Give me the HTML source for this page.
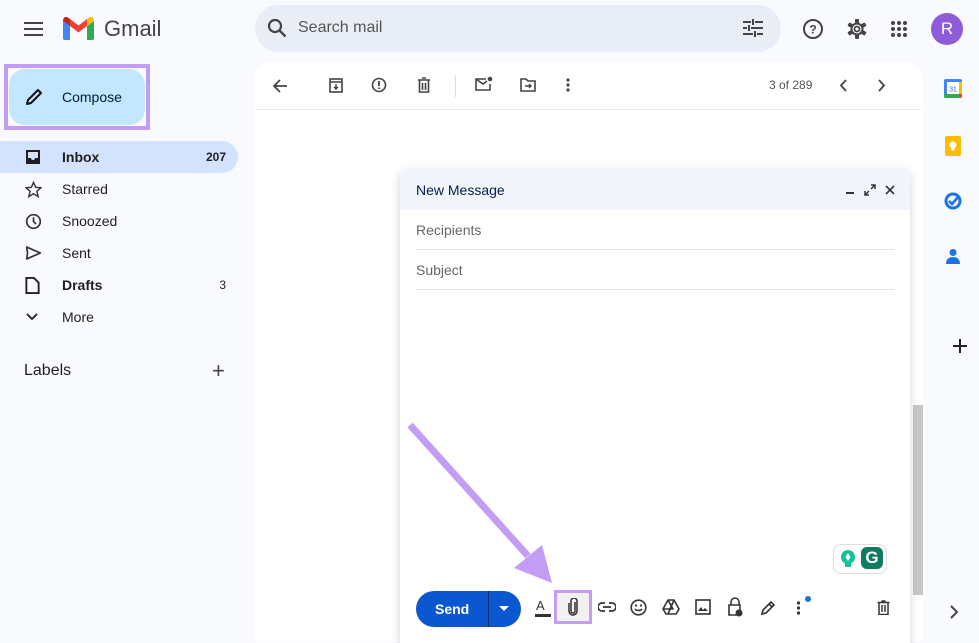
<!DOCTYPE html>
<html><head><meta charset="utf-8"><style>
*{box-sizing:border-box;margin:0;padding:0}
body{width:979px;height:637px;overflow:hidden;background:#f8fafd;font-family:"Liberation Sans",Arial,sans-serif;position:relative;color:#1f1f1f}
.a{position:absolute}
svg{display:block}
.nav{position:absolute;left:0;width:238px;height:32px;font-size:14px;display:flex;align-items:center;color:#1f1f1f}
.nav .ic{position:absolute;left:25px;top:8px}
.nav .t{position:absolute;left:62px}
.nav .n{position:absolute;right:12px;font-size:12px}
</style></head><body>
<div class="a" style="left:24px;top:22px;width:19px;height:14px">
<div style="height:2px;background:#444;margin-bottom:4px"></div><div style="height:2px;background:#444;margin-bottom:4px"></div><div style="height:2px;background:#444"></div></div>
<svg class="a" style="left:63px;top:17px" width="31" height="23" viewBox="0 0 31 23">
<path d="M0 4v17a2 2 0 0 0 2 2h5V9z" fill="#4285f4"/><path d="M24 9v14h5a2 2 0 0 0 2-2V4z" fill="#34a853"/>
<path d="M7 9l8.5 6.5L24 9V2l-8.5 6.5L7 2z" fill="#ea4335"/><path d="M0 4l7 5V2L4 0C2 -1 0 1 0 4z" fill="#c5221f"/><path d="M31 4l-7 5V2l3-2c2-1 4 1 4 4z" fill="#fbbc04"/></svg>
<div class="a" style="left:104px;top:16px;font-size:22px;color:#444">Gmail</div>
<div class="a" style="left:255px;top:5px;width:526px;height:47px;border-radius:24px;background:#e9eef6"></div>
<svg class="a" style="left:267px;top:18px" width="20" height="20" viewBox="0 0 20 20"><circle cx="8" cy="8" r="6" fill="none" stroke="#444" stroke-width="2.2"/><path d="M12.5 12.5l6 6" stroke="#444" stroke-width="2.4"/></svg>
<div class="a" style="left:298px;top:19px;font-size:16px;color:#555">Search mail</div>
<svg class="a" style="left:743px;top:19px" width="20" height="18" viewBox="0 0 20 18"><g stroke="#444" stroke-width="2"><path d="M0 3h8M12 3h8M0 9h4M8 9h12M0 15h10M14 15h6M10 0v6M6 6v6M12 12v6"/></g></svg>
<svg class="a" style="left:802px;top:18px" width="22" height="22" viewBox="0 0 22 22"><circle cx="11" cy="11" r="9" fill="none" stroke="#444" stroke-width="2"/><text x="11" y="15.5" font-size="12" font-weight="bold" text-anchor="middle" fill="#444" font-family="Liberation Sans">?</text></svg>
<svg class="a" style="left:846px;top:18px" width="22" height="22" viewBox="0 0 22 22"><g fill="#444"><rect x="9" y="1" width="4" height="20" rx="1"/><rect x="9" y="1" width="4" height="20" rx="1" transform="rotate(60 11 11)"/><rect x="9" y="1" width="4" height="20" rx="1" transform="rotate(120 11 11)"/></g><circle cx="11" cy="11" r="6.5" fill="#444"/><circle cx="11" cy="11" r="4.5" fill="#f8fafd"/><circle cx="11" cy="11" r="2.5" fill="none" stroke="#444" stroke-width="1.8"/></svg>
<svg class="a" style="left:890px;top:20px" width="18" height="18" viewBox="0 0 18 18" fill="#444"><circle cx="3" cy="3" r="2"/><circle cx="9" cy="3" r="2"/><circle cx="15" cy="3" r="2"/><circle cx="3" cy="9" r="2"/><circle cx="9" cy="9" r="2"/><circle cx="15" cy="9" r="2"/><circle cx="3" cy="15" r="2"/><circle cx="9" cy="15" r="2"/><circle cx="15" cy="15" r="2"/></svg>
<div class="a" style="left:931px;top:13px;width:32px;height:32px;border-radius:50%;background:#8e5cd9;color:#fff;font-size:17px;text-align:center;line-height:32px">R</div>
<div class="a" style="left:4px;top:64px;width:146px;height:66px;border:4px solid #c39cf4"></div>
<div class="a" style="left:9px;top:69px;width:136px;height:56px;border-radius:16px;background:#c2e7ff"></div>
<svg class="a" style="left:24px;top:87px" width="20" height="20" viewBox="0 0 20 20"><path d="M3 17l1-4L14 3l3 3L7 16z" fill="none" stroke="#111" stroke-width="2" stroke-linejoin="round"/></svg>
<div class="a" style="left:62px;top:89px;font-size:14px;color:#001d35">Compose</div>
<div class="a" style="left:0;top:141px;width:238px;height:32px;background:#d3e3fd;border-radius:0 16px 16px 0"></div>
<div class="nav" style="top:141px;font-weight:bold"><svg class="ic" width="16" height="16" viewBox="0 0 16 16"><path d="M1 1h14v14H1z" fill="#1f1f1f"/><path d="M3 3h10v6h-3a2 2 0 0 1-4 0H3z" fill="#d3e3fd"/></svg><span class="t">Inbox</span><span class="n">207</span></div>
<div class="nav" style="top:173px"><svg class="ic" width="17" height="17" viewBox="0 0 24 24"><path d="M12 2l3 7 7.5.6-5.7 5 1.8 7.4L12 18l-6.6 4 1.8-7.4-5.7-5L9 9z" fill="none" stroke="#333" stroke-width="2"/></svg><span class="t">Starred</span></div>
<div class="nav" style="top:205px"><svg class="ic" width="17" height="17" viewBox="0 0 20 20"><circle cx="10" cy="10" r="8" fill="none" stroke="#333" stroke-width="2"/><path d="M10 5v5l3 3" stroke="#333" stroke-width="2" fill="none"/></svg><span class="t">Snoozed</span></div>
<div class="nav" style="top:237px"><svg class="ic" width="17" height="16" viewBox="0 0 20 18"><path d="M2 2l16 7-16 7 1-7z" fill="none" stroke="#333" stroke-width="2" stroke-linejoin="round"/></svg><span class="t">Sent</span></div>
<div class="nav" style="top:269px;font-weight:bold"><svg class="ic" width="15" height="17" viewBox="0 0 15 18"><path d="M1 1h8l5 5v11H1z" fill="none" stroke="#222" stroke-width="2"/></svg><span class="t">Drafts</span><span class="n" style="font-weight:normal">3</span></div>
<div class="nav" style="top:301px"><svg class="ic" width="14" height="16" viewBox="0 0 14 16"><path d="M2 5l5 5 5-5" fill="none" stroke="#333" stroke-width="2"/></svg><span class="t">More</span></div>
<div class="a" style="left:24px;top:362px;font-size:16px;color:#1f1f1f">Labels</div>
<div class="a" style="left:212px;top:358px;font-size:22px;color:#444">+</div>
<div class="a" style="left:254px;top:62px;width:669px;height:580px;background:#fff;border-radius:16px 16px 0 0"></div>
<div class="a" style="left:255px;top:109px;width:666px;height:1px;background:#e8eaed"></div>
<div class="a" style="left:913px;top:405px;width:10px;height:190px;background:#c8c8c8"></div>
<svg class="a" style="left:272px;top:78px" width="16" height="16" viewBox="0 0 16 16"><path d="M15 8H2M8 2L2 8l6 6" fill="none" stroke="#444" stroke-width="1.8"/></svg>
<svg class="a" style="left:329px;top:77px" width="14" height="16" viewBox="0 0 14 16"><rect x="1" y="2" width="12" height="13" fill="none" stroke="#444" stroke-width="1.6"/><path d="M1 5h12M7 7v5M5 10l2 2 2-2" stroke="#444" stroke-width="1.4" fill="none"/></svg>
<svg class="a" style="left:371px;top:77px" width="16" height="16" viewBox="0 0 16 16"><circle cx="8" cy="8" r="6.5" fill="none" stroke="#444" stroke-width="1.6"/><path d="M8 4v5M8 10.5v1.5" stroke="#444" stroke-width="1.8"/></svg>
<svg class="a" style="left:417px;top:77px" width="14" height="16" viewBox="0 0 14 16"><path d="M1 3h12M5 1h4M2.5 3v12h9V3M5.5 6v7M8.5 6v7" fill="none" stroke="#444" stroke-width="1.6"/></svg>
<div class="a" style="left:455px;top:75px;width:1px;height:22px;background:#ddd"></div>
<svg class="a" style="left:475px;top:76px" width="18" height="16" viewBox="0 0 18 16"><path d="M11 3H1v11h14V8M1 3l7 5 4-3" fill="none" stroke="#444" stroke-width="1.6"/><circle cx="15" cy="3" r="2.3" fill="#444"/></svg>
<svg class="a" style="left:520px;top:78px" width="16" height="14" viewBox="0 0 16 14"><path d="M1 1h5l2 2h7v10H1z" fill="none" stroke="#444" stroke-width="1.6"/><path d="M5 8h6M9 6l2 2-2 2" stroke="#444" stroke-width="1.4" fill="none"/></svg>
<svg class="a" style="left:565px;top:77px" width="6" height="16" viewBox="0 0 6 16" fill="#444"><circle cx="3" cy="3" r="1.6"/><circle cx="3" cy="8" r="1.6"/><circle cx="3" cy="13" r="1.6"/></svg>
<div class="a" style="left:769px;top:78px;font-size:12px;color:#555">3 of 289</div>
<svg class="a" style="left:838px;top:79px" width="10" height="13" viewBox="0 0 10 13"><path d="M8 1L3 6.5 8 12" fill="none" stroke="#444" stroke-width="1.8"/></svg>
<svg class="a" style="left:877px;top:79px" width="10" height="13" viewBox="0 0 10 13"><path d="M2 1l5 5.5L2 12" fill="none" stroke="#444" stroke-width="1.8"/></svg>
<svg class="a" style="left:944px;top:79px" width="18" height="19" viewBox="0 0 18 19"><rect x="0" y="0" width="18" height="19" rx="2" fill="#4285f4"/><rect x="3" y="3" width="12" height="12" fill="#fff"/><path d="M0 15h15v4H2a2 2 0 0 1-2-2z" fill="#34a853"/><path d="M15 15h3v2a2 2 0 0 1-2 2h-1z" fill="#ea4335"/><path d="M15 3h3v12h-3z" fill="#fbbc04"/><text x="9" y="12.5" font-size="7" text-anchor="middle" fill="#1967d2" font-family="Liberation Sans">31</text></svg>
<svg class="a" style="left:945px;top:136px" width="16" height="20" viewBox="0 0 16 20"><rect width="16" height="20" rx="2" fill="#fbbc04"/><circle cx="8" cy="9" r="3.5" fill="#fff"/><rect x="6.5" y="12" width="3" height="2.5" fill="#fff"/></svg>
<svg class="a" style="left:944px;top:192px" width="18" height="18" viewBox="0 0 18 18"><circle cx="9" cy="9" r="7" fill="none" stroke="#1a73e8" stroke-width="3"/><path d="M5 9l3 3 7-8" fill="none" stroke="#1a73e8" stroke-width="2.6"/></svg>
<svg class="a" style="left:946px;top:248px" width="14" height="17" viewBox="0 0 14 17"><circle cx="7" cy="4.5" r="3.5" fill="#1a73e8"/><path d="M0 16c0-5 3-7 7-7s7 2 7 7z" fill="#1a73e8"/></svg>
<div class="a" style="left:953px;top:345px;width:14px;height:2px;background:#222"></div>
<div class="a" style="left:959px;top:339px;width:2px;height:14px;background:#222"></div>
<svg class="a" style="left:949px;top:605px" width="10" height="14" viewBox="0 0 10 14"><path d="M2 1l6 6-6 6" fill="none" stroke="#444" stroke-width="2"/></svg>
<div class="a" style="left:400px;top:168px;width:510px;height:475px;background:#fff;border-radius:8px 8px 0 0;box-shadow:0 4px 10px rgba(0,0,0,.18)"></div>
<div class="a" style="left:400px;top:168px;width:510px;height:42px;background:#f2f6fc;border-radius:8px 8px 0 0"></div>
<div class="a" style="left:416px;top:182px;font-size:14px;color:#041e49">New Message</div>
<div class="a" style="left:846px;top:192px;width:8px;height:2px;background:#333"></div>
<svg class="a" style="left:864px;top:184px" width="12" height="12" viewBox="0 0 12 12"><path d="M7 1h4v4M11 1L7 5M5 11H1V7M1 11l4-4" fill="none" stroke="#333" stroke-width="1.5"/></svg>
<svg class="a" style="left:885px;top:185px" width="10" height="10" viewBox="0 0 10 10"><path d="M1 1l8 8M9 1L1 9" stroke="#333" stroke-width="1.6"/></svg>
<div class="a" style="left:416px;top:222px;font-size:14px;color:#666">Recipients</div>
<div class="a" style="left:416px;top:249px;width:478px;height:1px;background:#e6e6e6"></div>
<div class="a" style="left:416px;top:262px;font-size:14px;color:#666">Subject</div>
<div class="a" style="left:416px;top:289px;width:478px;height:1px;background:#e6e6e6"></div>
<svg class="a" style="left:400px;top:420px" width="160" height="170" viewBox="0 0 160 170"><path d="M10 5L128 136" stroke="#c39cf4" stroke-width="7"/><path d="M114 148L152 163 142 125z" fill="#c39cf4"/></svg>
<div class="a" style="left:833px;top:544px;width:54px;height:30px;border:1px solid #ddd;border-radius:8px;background:#fff"></div>
<svg class="a" style="left:839px;top:549px" width="18" height="20" viewBox="0 0 18 20"><circle cx="9" cy="8" r="7" fill="#15c39a"/><path d="M6 14h6v4H6z" fill="#15c39a"/><path d="M9 4l2.5 4L9 12 6.5 8z" fill="#fff"/></svg>
<div class="a" style="left:861px;top:547px;width:22px;height:22px;border-radius:6px;background:#0f7b5f;color:#fff;font-weight:bold;font-size:17px;text-align:center;line-height:22px">G</div>
<div class="a" style="left:416px;top:591px;width:105px;height:36px;border-radius:18px;background:#0b57d0"></div>
<div class="a" style="left:488px;top:591px;width:1px;height:36px;background:#062f73"></div>
<div class="a" style="left:435px;top:601px;font-size:14px;font-weight:bold;color:#fff">Send</div>
<svg class="a" style="left:499px;top:606px" width="10" height="6" viewBox="0 0 10 6"><path d="M0 0h10L5 5z" fill="#fff"/></svg>
<div class="a" style="left:536px;top:598px;font-size:13px;color:#333">A</div>
<div class="a" style="left:535px;top:614px;width:16px;height:3px;background:#333"></div>
<div class="a" style="left:554px;top:590px;width:38px;height:34px;border:3px solid #c39cf4;background:#f1f1f1"></div>
<svg class="a" style="left:568px;top:598px" width="10" height="18" viewBox="0 0 10 18"><path d="M7 4v9a2 2 0 0 1-4 0V3a3 3 0 0 1 6 0v10a4 4 0 0 1-8 0V5" fill="none" stroke="#333" stroke-width="1.5"/></svg>
<svg class="a" style="left:598px;top:602px" width="18" height="10" viewBox="0 0 18 10"><path d="M7 1H4a4 4 0 0 0 0 8h3M11 1h3a4 4 0 0 1 0 8h-3M5 5h8" fill="none" stroke="#333" stroke-width="1.7"/></svg>
<svg class="a" style="left:630px;top:599px" width="17" height="17" viewBox="0 0 17 17"><circle cx="8.5" cy="8.5" r="7.3" fill="none" stroke="#333" stroke-width="1.6"/><circle cx="6" cy="6.5" r="1.1" fill="#333"/><circle cx="11" cy="6.5" r="1.1" fill="#333"/><path d="M5 10a4 3 0 0 0 7 0" fill="none" stroke="#333" stroke-width="1.5"/></svg>
<svg class="a" style="left:662px;top:599px" width="18" height="16" viewBox="0 0 18 16"><path d="M6 1h6l5 9-3 5H4l-3-5z M6 1l5 9H1M12 1L6 15" fill="none" stroke="#333" stroke-width="1.6" stroke-linejoin="round"/></svg>
<svg class="a" style="left:695px;top:599px" width="16" height="16" viewBox="0 0 16 16"><rect x="1" y="1" width="14" height="14" fill="none" stroke="#333" stroke-width="1.6"/><path d="M3 12l3-4 2 3 2-2 3 3z" fill="#333"/></svg>
<svg class="a" style="left:727px;top:597px" width="16" height="20" viewBox="0 0 16 20"><path d="M4 8V5a4 4 0 0 1 8 0v3M2 8h11v10H2z" fill="none" stroke="#333" stroke-width="1.6"/><circle cx="12" cy="16" r="3.5" fill="#333"/></svg>
<svg class="a" style="left:760px;top:600px" width="16" height="16" viewBox="0 0 16 16"><path d="M2 14l1-4 8-8 3 3-8 8z M9 4l3 3" fill="none" stroke="#333" stroke-width="1.6"/></svg>
<svg class="a" style="left:796px;top:600px" width="5" height="16" viewBox="0 0 5 16" fill="#333"><circle cx="2.5" cy="3" r="1.6"/><circle cx="2.5" cy="8" r="1.6"/><circle cx="2.5" cy="13" r="1.6"/></svg>
<div class="a" style="left:805px;top:596px;width:6px;height:6px;border-radius:50%;background:#1a73e8"></div>
<svg class="a" style="left:877px;top:600px" width="13" height="15" viewBox="0 0 13 15"><path d="M0.5 2.5h12M4.5 1h4M2 2.5v12h9v-12M5 5v7M8 5v7" fill="none" stroke="#333" stroke-width="1.5"/></svg>
</body></html>
